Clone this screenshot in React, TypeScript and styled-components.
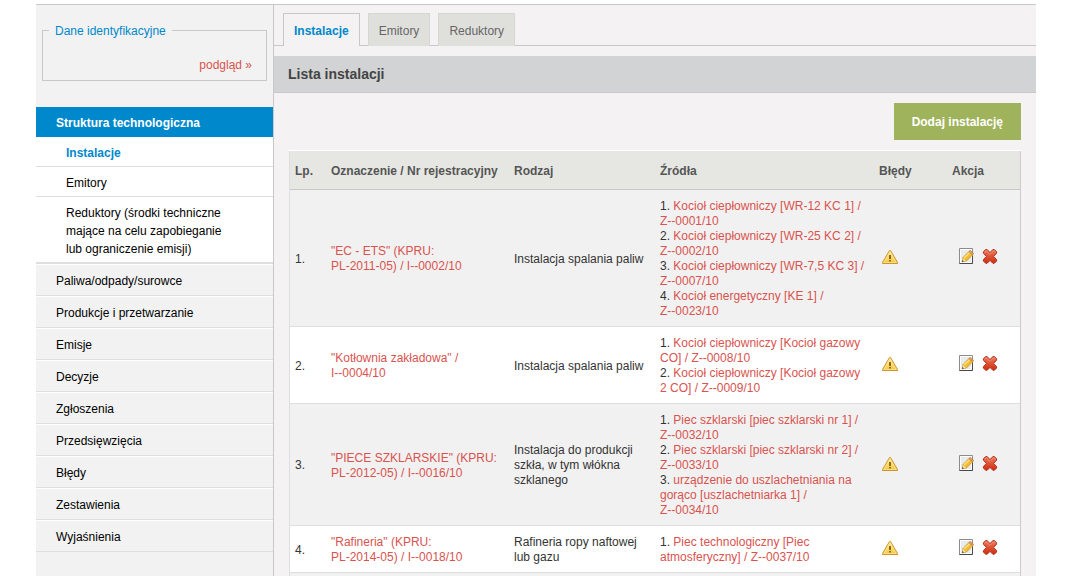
import React from 'react';
import styled, { createGlobalStyle, css } from 'styled-components';

const GlobalStyle = createGlobalStyle`
  * { box-sizing: border-box; }
  body {
    margin: 0;
    background: #fff;
    color: #333;
    font: 12px/15px Arial, "Liberation Sans", sans-serif;
  }
  a { color: #d9534f; text-decoration: none; }
  ul { list-style: none; margin: 0; padding: 0; }
`;

const Page = styled.div`
  height: 100vh;
  overflow: hidden;
  padding: 4px 34px 0 36px;
`;

const Shell = styled.div`
  display: flex;
  min-height: 100%;
  border-top: 1px solid #c8c8ca;
  background: #f4f2f3;
`;

const Sidebar = styled.aside`
  flex: 0 0 238px;
  border-right: 1px solid #c8c8ca;
  background: #f2f2f2;
`;

const Identity = styled.fieldset`
  margin: 17px 6px 26px;
  padding: 19px 14px 7px 6px;
  border: 1px solid #c8c8ca;
`;

const IdentityTitle = styled.legend`
  padding: 2px 6px 0;
  color: #0088cc;
`;

const PreviewLink = styled.a`
  display: block;
  text-align: right;
`;

const sidebarRow = css`
  display: block;
  line-height: 18px;
`;

const GroupLink = styled.a`
  ${sidebarRow}
  padding: 7px 20px 5px;
  background: #0088cc;
  color: #fff;
  font-weight: bold;
`;

const SubMenu = styled.ul`
  background: #fff;
  border-bottom: 1px solid #dedede;
`;

const SubLink = styled.a<{ $active?: boolean }>`
  ${sidebarRow}
  padding: 7px 40px 4px 30px;
  border-bottom: 1px solid #dedede;
  color: ${(p) => (p.$active ? '#0088cc' : '#000')};
  font-weight: ${(p) => (p.$active ? 'bold' : 'normal')};
`;

const MenuLink = styled.a`
  ${sidebarRow}
  padding: 7px 20px 5px;
  border-top: 1px solid #fff;
  border-bottom: 1px solid #dedede;
  color: #000;
`;

const Content = styled.main`
  flex: 1;
  min-width: 0;
`;

const Tabs = styled.nav`
  display: flex;
  gap: 8px;
  padding: 8px 9px 0;
  border-bottom: 1px solid #c8c8ca;
`;

const Tab = styled.a<{ $active?: boolean }>`
  margin-bottom: -1px;
  padding: 10px 10px 7px;
  border: 1px solid ${(p) => (p.$active ? '#c8c8ca' : '#d6d7d4')};
  border-bottom: 0;
  background: ${(p) => (p.$active ? '#f4f2f3' : '#dfe0dc')};
  color: ${(p) => (p.$active ? '#0088cc' : '#666')};
  font-weight: ${(p) => (p.$active ? 'bold' : 'normal')};
`;

const Heading = styled.h1`
  margin: 10px 0 0;
  padding: 9px 14px;
  border-bottom: 1px solid #c8c8ca;
  background: #d1d3d4;
  color: #444;
  font-size: 14px;
  line-height: 18px;
`;

const Toolbar = styled.div`
  display: flex;
  justify-content: flex-end;
  padding: 10px 15px;
`;

const AddButton = styled.button`
  padding: 12px 18px 10px;
  border: 0;
  background: #9fb35d;
  color: #fff;
  font: bold 12px/15px Arial, "Liberation Sans", sans-serif;
`;

const TableFrame = styled.div`
  margin: 0 15px;
  border-top: 1px solid #fff;
`;

const Table = styled.table`
  width: 100%;
  table-layout: fixed;
  border-collapse: separate;
  border-spacing: 0;
  border-left: 1px solid #dedede;
  border-right: 1px solid #ccc;
`;

const Col = styled.col<{ $width?: number }>`
  width: ${(p) => (p.$width ? `${p.$width}px` : 'auto')};
`;

const HeadCell = styled.th`
  padding: 13px 0 10px 5px;
  border-bottom: 1px solid #c8c8ca;
  background: #e6e7e2;
  color: #555;
  text-align: left;
  white-space: nowrap;
`;

const Row = styled.tr`
  background: #fff;
  &:nth-child(odd) { background: #f1f1f1; }
`;

const Cell = styled.td`
  padding: 9px 5px 7px;
  border-bottom: 1px solid #dedede;
`;

const LinkCell = styled(Cell)`
  padding-right: 8px;
`;

const IconCell = styled(Cell)`
  padding-top: 6px;
  padding-bottom: 10px;
`;

const Code = styled.span`
  white-space: nowrap;
`;

const IconGroup = styled.div<{ $indent: number }>`
  display: flex;
  gap: 8px;
  padding-left: ${(p) => p.$indent}px;
`;

const IconButton = styled.button`
  display: block;
  width: 16px;
  height: 16px;
  padding: 0;
  border: 0;
  background: none;
`;

const WarningIcon = () => (
  <svg width="16" height="16" viewBox="0 0 16 16" role="img" aria-label="Błędy">
    <defs>
      <linearGradient id="warn" x1="0" y1="0" x2="0" y2="1">
        <stop offset="0" stopColor="#fff0a8" />
        <stop offset="1" stopColor="#f3c63c" />
      </linearGradient>
    </defs>
    <path d="M7.5 2.5 H8.5 L15.5 14.5 V15.5 H0.5 V14.5 Z" fill="url(#warn)" stroke="#cf9330" strokeLinejoin="round" />
    <path d="M8 4.4 L14 14.5 H2 Z" fill="none" stroke="#fbe590" strokeWidth="0.8" />
    <path d="M7 7h2v4H7z M7 12h2v1.5H7z" fill="#96680f" />
  </svg>
);

const EditIcon = () => (
  <svg width="16" height="16" viewBox="0 0 16 16" aria-hidden="true">
    <path d="M1.5 0.5 H14.5 V15.5 H1.5 Z" fill="#e8eaec" stroke="#8c8c8c" />
    <path d="M1.5 15.5 H14.5 V8" fill="none" stroke="#4a4a4a" />
    <path d="M2.5 1.5 H13.5 V14.5 H2.5 Z" fill="none" stroke="#fff" />
    <path d="M4.8 9.8 L11 3.4 L14.8 6.6 L8.4 13 L4.2 13.8 Z" fill="#f4bb2a" stroke="#c08422" strokeWidth="0.7" />
    <path d="M6 10 L12 4.2" stroke="#ffe58a" strokeWidth="1.3" />
    <path d="M10.8 3.6 L12.2 2.3 L15.6 5.2 L14.6 6.8 Z" fill="#dd9c74" stroke="#b5762a" strokeWidth="0.6" />
    <path d="M4.8 10 L8 12.9 L4.2 13.8 Z" fill="#f8e0b6" />
    <path d="M4.3 12.1 L5.9 13.4 L4 13.9 Z" fill="#444" />
  </svg>
);

const DeleteIcon = () => (
  <svg width="16" height="16" viewBox="0 0 16 16" aria-hidden="true">
    <defs>
      <linearGradient id="del" x1="0" y1="0" x2="0" y2="1">
        <stop offset="0" stopColor="#ea7c5c" />
        <stop offset="0.5" stopColor="#df5335" />
        <stop offset="1" stopColor="#cb2d10" />
      </linearGradient>
    </defs>
    <path
      d="M3.7 1.5 H5.1 L8 4.6 L10.9 1.5 H12.3 L14.6 3.8 V5.2 L11.6 8.4 L14.6 11.6 V13 L12.3 15.3 H10.9 L8 12.4 L5.1 15.3 H3.7 L1.4 13 V11.6 L4.4 8.4 L1.4 5.2 V3.8 Z"
      fill="url(#del)"
      stroke="#b5301f"
      strokeLinejoin="round"
    />
    <path d="M2.8 4.4 L4.4 2.8 L8 6.4 L11.6 2.8 L13.2 4.4" fill="none" stroke="#f3a085" strokeWidth="0.6" />
  </svg>
);

/* Keeps register numbers such as PL-2011-05 on one line. */
const Label = ({ text }: { text: string }) => (
  <>
    {text.split(' ').map((word, i) => (
      <React.Fragment key={i}>
        {i > 0 && ' '}
        {word.includes('-') ? <Code>{word}</Code> : word}
      </React.Fragment>
    ))}
  </>
);

const menu = [
  'Paliwa/odpady/surowce',
  'Produkcje i przetwarzanie',
  'Emisje',
  'Decyzje',
  'Zgłoszenia',
  'Przedsięwzięcia',
  'Błędy',
  'Zestawienia',
  'Wyjaśnienia',
];

const installations = [
  {
    name: '"EC - ETS" (KPRU: PL-2011-05) / I--0002/10',
    kind: 'Instalacja spalania paliw',
    sources: [
      'Kocioł ciepłowniczy [WR-12 KC 1] / Z--0001/10',
      'Kocioł ciepłowniczy [WR-25 KC 2] / Z--0002/10',
      'Kocioł ciepłowniczy [WR-7,5 KC 3] / Z--0007/10',
      'Kocioł energetyczny [KE 1] / Z--0023/10',
    ],
  },
  {
    name: '"Kotłownia zakładowa" / I--0004/10',
    kind: 'Instalacja spalania paliw',
    sources: [
      'Kocioł ciepłowniczy [Kocioł gazowy CO] / Z--0008/10',
      'Kocioł ciepłowniczy [Kocioł gazowy 2 CO] / Z--0009/10',
    ],
  },
  {
    name: '"PIECE SZKLARSKIE" (KPRU: PL-2012-05) / I--0016/10',
    kind: 'Instalacja do produkcji szkła, w tym włókna szklanego',
    sources: [
      'Piec szklarski [piec szklarski nr 1] / Z--0032/10',
      'Piec szklarski [piec szklarski nr 2] / Z--0033/10',
      'urządzenie do uszlachetniania na gorąco [uszlachetniarka 1] / Z--0034/10',
    ],
  },
  {
    name: '"Rafineria" (KPRU: PL-2014-05) / I--0018/10',
    kind: 'Rafineria ropy naftowej lub gazu',
    sources: ['Piec technologiczny [Piec atmosferyczny] / Z--0037/10'],
  },
];

export default function App() {
  return (
    <Page>
      <GlobalStyle />
      <Shell>
        <Sidebar>
          <Identity>
            <IdentityTitle>Dane identyfikacyjne</IdentityTitle>
            <PreviewLink href="#podglad">podgląd »</PreviewLink>
          </Identity>
          <nav>
            <GroupLink href="#struktura">Struktura technologiczna</GroupLink>
            <SubMenu>
              <li><SubLink href="#instalacje" $active>Instalacje</SubLink></li>
              <li><SubLink href="#emitory">Emitory</SubLink></li>
              <li>
                <SubLink href="#reduktory">
                  Reduktory (środki techniczne mające na celu zapobieganie lub ograniczenie emisji)
                </SubLink>
              </li>
            </SubMenu>
            <ul>
              {menu.map((item) => (
                <li key={item}><MenuLink href="#menu">{item}</MenuLink></li>
              ))}
            </ul>
          </nav>
        </Sidebar>
        <Content>
          <Tabs>
            <Tab href="#instalacje" $active>Instalacje</Tab>
            <Tab href="#emitory">Emitory</Tab>
            <Tab href="#reduktory">Reduktory</Tab>
          </Tabs>
          <Heading>Lista instalacji</Heading>
          <Toolbar>
            <AddButton type="button">Dodaj instalację</AddButton>
          </Toolbar>
          <TableFrame>
            <Table>
              <colgroup>
                <Col $width={36} />
                <Col $width={183} />
                <Col $width={146} />
                <Col />
                <Col $width={73} />
                <Col $width={73} />
              </colgroup>
              <thead>
                <tr>
                  <HeadCell>Lp.</HeadCell>
                  <HeadCell>Oznaczenie / Nr rejestracyjny</HeadCell>
                  <HeadCell>Rodzaj</HeadCell>
                  <HeadCell>Źródła</HeadCell>
                  <HeadCell>Błędy</HeadCell>
                  <HeadCell>Akcja</HeadCell>
                </tr>
              </thead>
              <tbody>
                {installations.map((item, index) => (
                  <Row key={item.name}>
                    <Cell>{index + 1}.</Cell>
                    <LinkCell><a href="#instalacja"><Label text={item.name} /></a></LinkCell>
                    <Cell>{item.kind}</Cell>
                    <LinkCell>
                      {item.sources.map((source, n) => (
                        <div key={source}>
                          {n + 1}. <a href="#zrodlo"><Label text={source} /></a>
                        </div>
                      ))}
                    </LinkCell>
                    <IconCell>
                      <IconGroup $indent={3}><WarningIcon /></IconGroup>
                    </IconCell>
                    <IconCell>
                      <IconGroup $indent={6}>
                        <IconButton type="button" aria-label="Edytuj"><EditIcon /></IconButton>
                        <IconButton type="button" aria-label="Usuń"><DeleteIcon /></IconButton>
                      </IconGroup>
                    </IconCell>
                  </Row>
                ))}
                <Row><Cell colSpan={6} /></Row>
              </tbody>
            </Table>
          </TableFrame>
        </Content>
      </Shell>
    </Page>
  );
}
